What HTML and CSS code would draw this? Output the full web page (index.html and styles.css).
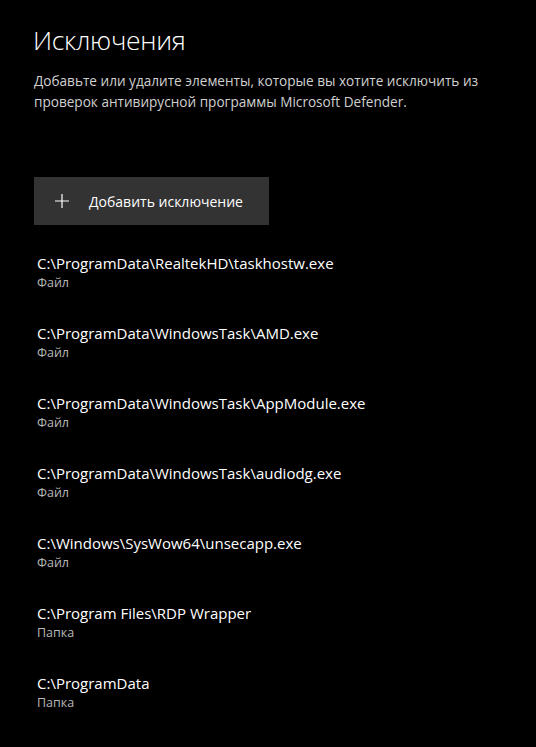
FILE: index.html
```html
<!DOCTYPE html>
<html lang="ru">
<head>
  <meta charset="UTF-8">
  <title>Исключения</title>
  <link rel="stylesheet" href="styles.css">
</head>
<body>
  <div class="page">
    <h1 class="title">Исключения</h1>
    <p class="desc">Добавьте или удалите элементы, которые вы хотите исключить из проверок антивирусной программы Microsoft Defender.</p>

    <button class="add-btn">
      <svg class="plus" width="16" height="16" viewBox="0 0 16 16">
        <path d="M8 1v14M1 8h14" stroke="#fff" stroke-width="1.2" fill="none"/>
      </svg>
      <span>Добавить исключение</span>
    </button>

    <ul class="list">
      <li class="item">
        <div class="path">C:\ProgramData\RealtekHD\taskhostw.exe</div>
        <div class="kind">Файл</div>
      </li>
      <li class="item">
        <div class="path">C:\ProgramData\WindowsTask\AMD.exe</div>
        <div class="kind">Файл</div>
      </li>
      <li class="item">
        <div class="path">C:\ProgramData\WindowsTask\AppModule.exe</div>
        <div class="kind">Файл</div>
      </li>
      <li class="item">
        <div class="path">C:\ProgramData\WindowsTask\audiodg.exe</div>
        <div class="kind">Файл</div>
      </li>
      <li class="item">
        <div class="path">C:\Windows\SysWow64\unsecapp.exe</div>
        <div class="kind">Файл</div>
      </li>
      <li class="item">
        <div class="path">C:\Program Files\RDP Wrapper</div>
        <div class="kind">Папка</div>
      </li>
      <li class="item">
        <div class="path">C:\ProgramData</div>
        <div class="kind">Папка</div>
      </li>
    </ul>
  </div>
</body>
</html>
```

FILE: styles.css
```css
body {
  margin: 0;
  padding: 0;
  background: #000;
  color: #fff;
  font-family: "Open Sans", "Noto Sans", Arial, sans-serif;
}
.page {
  padding: 22px 0 0 33px;
  width: 490px;
}
.title {
  margin: 0;
  font-size: 26.5px;
  font-weight: 300;
  line-height: 36px;
  letter-spacing: -0.3px;
}
.desc {
  margin: 12px 0 0 1px;
  font-size: 13.6px;
  line-height: 21px;
  color: #d0d0d0;
  width: 460px;
}
.add-btn {
  display: flex;
  align-items: center;
  margin: 65px 0 0 1px;
  width: 235px;
  height: 48px;
  padding: 0 0 0 20px;
  border: none;
  background: #333;
  color: #fff;
  font-family: inherit;
  font-size: 14px;
  cursor: pointer;
}
.plus {
  margin-right: 19px;
}
.list {
  list-style: none;
  margin: 27px 0 0 4px;
  padding: 0;
}
.item {
  height: 70px;
}
.path {
  font-size: 15px;
  line-height: 22px;
  color: #fff;
}
.kind {
  font-size: 12.5px;
  line-height: 18px;
  color: #b8b8b8;
}
```
